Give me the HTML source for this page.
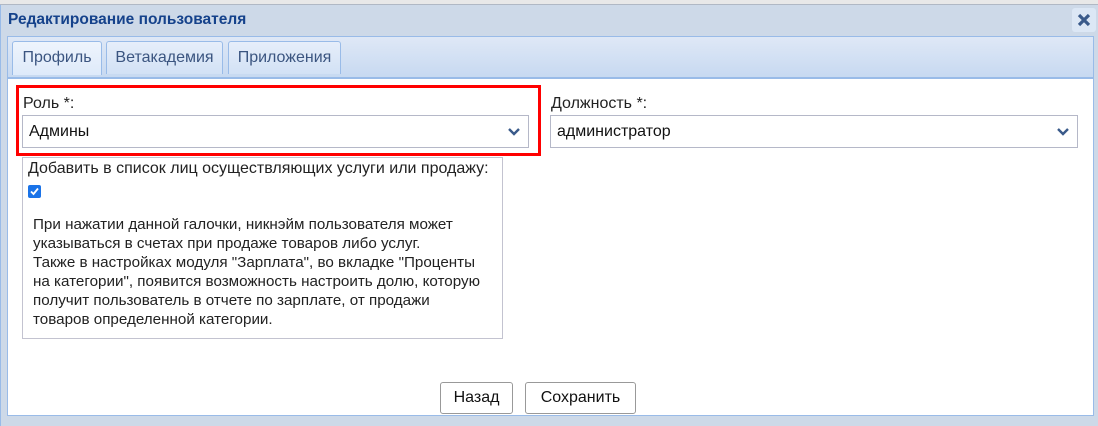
<!DOCTYPE html>
<html><head><meta charset="utf-8"><style>
*{box-sizing:border-box;margin:0;padding:0}
body{width:1098px;height:426px;overflow:hidden;background:#cfdbea;font-family:"Liberation Sans",Arial,sans-serif;position:relative}
.abs{position:absolute}
.top{left:0;top:0;width:1098px;height:5px;background:#e8e8e8;border-bottom:1px solid #b0b8c4}
.dlg{left:0;top:5px;width:1098px;height:421px;background:#cdd9e8;border-left:1px solid #99bbe8}
.title{left:8px;top:11px;font-size:15.5px;font-weight:bold;color:#15428b}
.close{left:1072px;top:8px;width:24px;height:24px;background:#dce7f5;border-radius:3px}
.tabbar{left:7px;top:36px;width:1087px;height:42px;background:linear-gradient(#dfe8f6,#c7d9f1);border:1px solid #99bbe8}
.tab{top:41px;height:33px;border:1px solid #99bbe8;border-bottom:none;border-radius:3px 3px 0 0;background:linear-gradient(#e6eefa,#d2e1f5);font-size:16px;color:#3b5580;text-align:center;line-height:32px}
.tab.act{background:linear-gradient(#eef4fc,#deeafa);height:34px}
.content{left:7px;top:78px;width:1087px;height:338px;background:#fff;border:1px solid #99bbe8}
.lbl{font-size:16px;color:#222}
.sel{height:33px;border:1px solid #b5b8c8;background:#fff;font-size:16px;color:#111;padding-left:6px;line-height:31px}
.red{left:16px;top:85px;width:525px;height:71px;border:3px solid #f00}
.box{left:22px;top:157px;width:481px;height:182px;border:1px solid #c3c3d0}
.txt{left:33px;top:215px;font-size:15.2px;color:#222;line-height:19px}
.btn{top:382px;height:32px;border:1px solid #999;border-radius:3px;background:#fff;font-size:16px;color:#111;text-align:center;line-height:30px}
</style></head><body>
<div class="abs top"></div>
<div class="abs dlg"></div>
<div class="abs title">Редактирование пользователя</div>
<div class="abs close"><svg width="24" height="24"><path d="M7 7L17 17M17 7L7 17" stroke="#3a5a8a" stroke-width="3.2"/></svg></div>
<div class="abs tabbar"></div>
<div class="abs tab act" style="left:12px;width:90px">Профиль</div>
<div class="abs tab" style="left:106px;width:117px">Ветакадемия</div>
<div class="abs tab" style="left:228px;width:113px">Приложения</div>
<div class="abs content"></div>
<div class="abs lbl" style="left:23px;top:95px">Роль *:</div>
<div class="abs sel" style="left:22px;top:115px;width:507px">Админы<svg class="abs" style="right:8px;top:11px" width="12" height="10"><path d="M1 2L6 7L11 2" stroke="#3a5a8a" stroke-width="2.4" fill="none"/></svg></div>
<div class="abs red"></div>
<div class="abs lbl" style="left:551px;top:95px">Должность *:</div>
<div class="abs sel" style="left:550px;top:115px;width:528px">администратор<svg class="abs" style="right:8px;top:11px" width="12" height="10"><path d="M1 2L6 7L11 2" stroke="#3a5a8a" stroke-width="2.4" fill="none"/></svg></div>
<div class="abs box"></div>
<div class="abs lbl" style="left:28px;top:160px">Добавить в список лиц осуществляющих услуги или продажу:</div>
<div class="abs" style="left:28px;top:185px;width:13px;height:13px;background:#1a73e8;border-radius:2px"><svg width="13" height="13"><path d="M3 6.5L5.5 9L10 3.5" stroke="#fff" stroke-width="1.8" fill="none"/></svg></div>
<div class="abs txt">При нажатии данной галочки, никнэйм пользователя может<br>указываться в счетах при продаже товаров либо услуг.<br>Также в настройках модуля "Зарплата", во вкладке "Проценты<br>на категории", появится возможность настроить долю, которую<br>получит пользователь в отчете по зарплате, от продажи<br>товаров определенной категории.</div>
<div class="abs btn" style="left:440px;width:73px">Назад</div>
<div class="abs btn" style="left:525px;width:111px">Сохранить</div>
</body></html>
